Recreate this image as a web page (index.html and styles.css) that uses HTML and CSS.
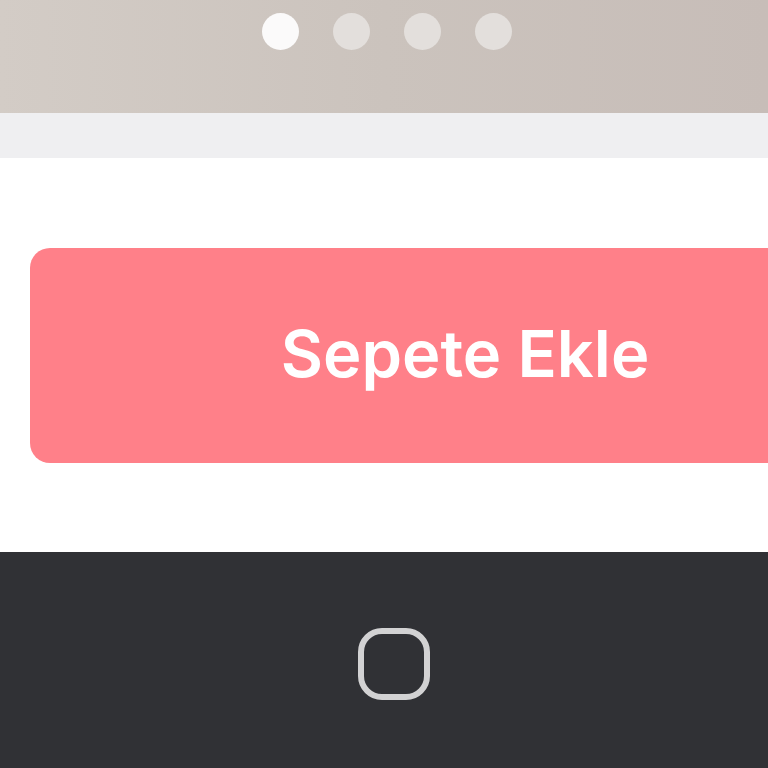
FILE: index.html
```html
<!DOCTYPE html>
<html lang="tr">
<head>
<meta charset="utf-8">
<link rel="stylesheet" href="styles.css">
</head>
<body>
<div class="page">
  <div class="hero">
    <div class="dots">
      <span class="dot active"></span>
      <span class="dot"></span>
      <span class="dot"></span>
      <span class="dot"></span>
    </div>
  </div>
  <div class="band"></div>
  <div class="action">
    <button class="cart-btn">Sepete Ekle</button>
  </div>
  <div class="navbar">
    <svg class="home" width="74" height="74" viewBox="0 0 74 74">
      <rect x="4" y="4" width="66" height="66" rx="21" ry="21" fill="none" stroke="#d2d2d3" stroke-width="6"/>
    </svg>
  </div>
</div>
</body>
</html>
```
FILE: styles.css
```css
html, body {
  margin: 0;
  padding: 0;
  width: 768px;
  height: 768px;
  overflow: hidden;
  background: #ffffff;
}
.page {
  width: 768px;
  height: 768px;
  display: flex;
  flex-direction: column;
  overflow: hidden;
}
.hero {
  height: 113px;
  flex: none;
  background: linear-gradient(90deg, #d3ccc6 0%, #cbc3bd 50%, #c7bdb8 100%);
  display: flex;
  justify-content: center;
}
.dots {
  display: flex;
  gap: 34px;
  padding-top: 13px;
  margin-left: 6px;
}
.dot {
  width: 37px;
  height: 37px;
  border-radius: 50%;
  background: #e3dfdc;
}
.dot.active {
  background: #fbfafa;
}
.band {
  height: 45px;
  flex: none;
  background: #efeff1;
}
.action {
  height: 394px;
  flex: none;
  background: #ffffff;
  padding: 90px 0 0 30px;
  box-sizing: border-box;
}
.cart-btn {
  width: 870px;
  height: 215px;
  border: none;
  border-radius: 20px;
  background: #ff8089;
  color: #ffffff;
  font-family: "Inter", sans-serif;
  font-weight: 600;
  font-size: 65px;
  padding: 0 0 4px 0;
  margin: 0;
}
.navbar {
  flex: 1;
  background: #303135;
  display: flex;
  justify-content: center;
  padding-top: 75px;
  box-sizing: border-box;
}
.home {
  margin-left: 20px;
  display: block;
}
```
